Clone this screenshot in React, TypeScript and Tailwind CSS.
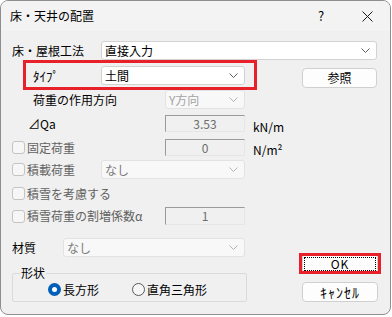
import React from "react";

const font = { fontFamily: '"Noto Sans CJK JP", "Noto Sans", sans-serif' };

function Chevron({ color = "#5f5f5f" }: { color?: string }) {
  return (
    <svg width="9" height="5" viewBox="0 0 9 5" className="shrink-0">
      <polyline points="0.5,0.5 4.5,4.5 8.5,0.5" fill="none" stroke={color} strokeWidth="1" />
    </svg>
  );
}

function Combo({
  w,
  text,
  disabled,
  textColor,
}: {
  w: string;
  text: string;
  disabled?: boolean;
  textColor?: string;
}) {
  return (
    <div
      className={`${w} h-[19px] flex items-center justify-between pl-[3px] pr-[6px] rounded-[3px] border ${
        disabled ? "bg-[#f8f8f8] border-[#e2e2e2]" : "bg-white border-[#d2d2d2]"
      }`}
    >
      <span className={`text-[12px] leading-none ${textColor ?? "text-black"}`}>{text}</span>
      <Chevron color={disabled ? "#b5b5b5" : "#5f5f5f"} />
    </div>
  );
}

function TextBox({ value, h = "h-[17px]" }: { value: string; h?: string }) {
  return (
    <div
      className={`w-[80px] ${h} flex items-start justify-center pt-[1px] bg-[#f0f0f0] border-t border-l border-t-[#9a9a9a] border-l-[#9a9a9a] border-b border-r border-b-[#e6e6e6] border-r-[#e6e6e6]`}
    >
      <span className="text-[12px] leading-[13px] text-[#6d6d6d]">{value}</span>
    </div>
  );
}

function Check({ label, w }: { label: string; w: string }) {
  return (
    <div className={`${w} flex items-center`}>
      <span className="w-[13px] h-[13px] rounded-[3px] border border-[#c4c4c4] bg-[#f6f6f6] shrink-0" />
      <span className="ml-[2px] text-[12px] leading-none text-[#626262] whitespace-nowrap">{label}</span>
    </div>
  );
}

function Button({ children, className = "" }: { children: React.ReactNode; className?: string }) {
  return (
    <div
      className={`relative w-[76px] h-[20px] flex items-center justify-center rounded-[4px] border border-[#d0d0d0] bg-[#fdfdfd] text-[12px] leading-none text-black ${className}`}
    >
      {children}
    </div>
  );
}

export default function App() {
  return (
    <div className="w-[392px] h-[317px] bg-white" style={font}>
      <div className="w-[391px] h-[315px] rounded-[8px] border border-[#8e8e8e] bg-[#f0f0f0] overflow-hidden">
        {/* title bar */}
        <div className="h-[30px] flex items-center bg-[#f3f3f3]">
          <span className="pl-[9px] text-[12px] leading-none text-black">床・天井の配置</span>
          <div className="ml-auto flex">
            <div className="w-[46px] h-[30px] flex items-center justify-center text-[13px] text-black">?</div>
            <div className="w-[46px] h-[30px] flex items-center justify-center">
              <svg width="11" height="11" viewBox="0 0 11 11">
                <path d="M0.5 0.5 L10.5 10.5 M10.5 0.5 L0.5 10.5" stroke="#1a1a1a" strokeWidth="1" />
              </svg>
            </div>
          </div>
        </div>

        {/* body */}
        <div className="pt-[10px] pl-[11px] flex flex-col">
          <div className="h-[19px] flex items-center">
            <span className="w-[89px] text-[12px] leading-none">床・屋根工法</span>
            <Combo w="w-[276px]" text="直接入力" />
          </div>

          <div className="relative mt-[6px] h-[19px] flex items-start">
            <span className="w-[89px] h-[19px] flex items-center pl-[21px] text-[13px] leading-none">ﾀｲﾌﾟ</span>
            <Combo w="w-[144px]" text="土間" />
            <Button className="ml-[57px] mt-[2px] !w-[75px]">参照</Button>
            <div className="absolute left-[11px] top-[-6px] w-[234px] h-[30px] border-[3px] border-[#e8202a]" />
          </div>

          <div className="mt-[5px] h-[19px] flex items-center">
            <span className="w-[153px] pl-[21px] text-[12px] leading-none">荷重の作用方向</span>
            <Combo w="w-[80px]" text="Y方向" disabled textColor="text-[#a3a3a3]" />
          </div>

          <div className="mt-[6px] h-[17px] flex items-center">
            <span className="w-[153px] pl-[16px] text-[12px] leading-none">⊿Qa</span>
            <TextBox value="3.53" />
            <span className="ml-[8px] pt-[7px] text-[12px] leading-none">kN/m</span>
          </div>

          <div className="mt-[7px] h-[17px] flex items-center">
            <Check w="w-[153px]" label="固定荷重" />
            <TextBox value="0" />
            <span className="ml-[8px] pt-[5px] text-[12px] leading-none">N/m²</span>
          </div>

          <div className="mt-[4px] h-[19px] flex items-center">
            <Check w="w-[89px]" label="積載荷重" />
            <Combo w="w-[144px]" text="なし" disabled textColor="text-[#7a7a7a]" />
          </div>

          <div className="mt-[6px] h-[17px] flex items-center">
            <Check w="w-[200px]" label="積雪を考慮する" />
          </div>

          <div className="mt-[5px] h-[18px] flex items-center">
            <Check w="w-[153px]" label="積雪荷重の割増係数α" />
            <TextBox value="1" h="h-[18px]" />
          </div>

          {/* bottom section */}
          <div className="mt-[13px] flex">
            <div className="w-[235px] flex flex-col">
              <div className="h-[19px] flex items-center">
                <span className="w-[51px] text-[12px] leading-none">材質</span>
                <Combo w="w-[182px]" text="なし" disabled textColor="text-[#7a7a7a]" />
              </div>
              <div className="relative mt-[16px] h-[29px] border border-[#dadada] rounded-[2px]">
                <span className="absolute left-[7px] top-[-8px] px-[1px] bg-[#f0f0f0] text-[12px] leading-[14px]">形状</span>
                <div className="h-full flex items-center pl-[35px] pt-[4px]">
                  <div className="w-[84px] flex items-center">
                    <span className="w-[13px] h-[13px] rounded-full bg-[#005fb8] flex items-center justify-center">
                      <span className="w-[5px] h-[5px] rounded-full bg-white" />
                    </span>
                    <span className="ml-[2px] text-[12px] leading-none">長方形</span>
                  </div>
                  <div className="flex items-center">
                    <span className="w-[13px] h-[13px] rounded-full border border-[#5a5a5a] bg-[#f6f6f6]" />
                    <span className="ml-[2px] text-[12px] leading-none">直角三角形</span>
                  </div>
                </div>
              </div>
            </div>

            <div className="ml-[55px] flex flex-col">
              <Button className="mt-[16px]">
                <span className="absolute left-[1px] right-[1px] top-[2px] bottom-[2px] border border-dotted border-black" />
                <span className="tracking-[1px]">OK</span>
                <span className="absolute left-[-4px] right-[-4px] top-[-2px] bottom-[-1px] border-[3px] border-[#e8202a]" />
              </Button>
              <Button className="mt-[8px]">
                <span className="text-[14px] tracking-[1px]">ｷｬﾝｾﾙ</span>
              </Button>
            </div>
          </div>
        </div>
      </div>
    </div>
  );
}
